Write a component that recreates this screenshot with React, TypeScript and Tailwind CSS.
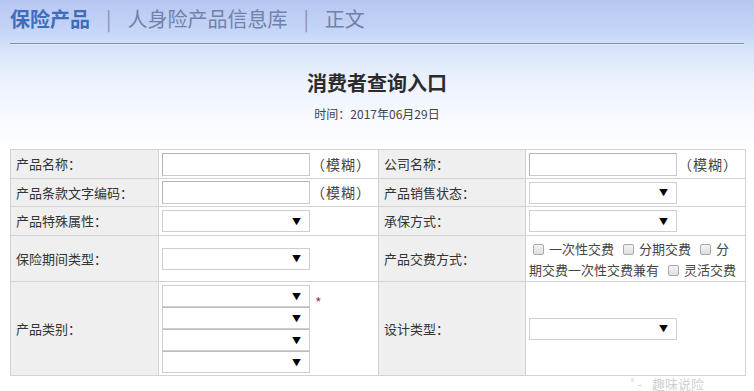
const font = { fontFamily: '"Microsoft YaHei", "Noto Sans CJK SC", "Liberation Sans", sans-serif' }

function TextBox() {
    return <div className="w-[148px] h-[23px] bg-white border border-[#c9c9c9] border-t-[#b5b5b5] border-l-[#b5b5b5]" />
}

function Fuzzy() {
    return <span className="ml-[1px] text-[14px] tracking-[1px] text-[#444]">（模糊）</span>
}

function Select({ className = "" }: { className?: string }) {
    return (
        <div className={`w-[148px] h-[22px] bg-white border border-[#cfcfcf] flex items-center justify-end pr-[8px] ${className}`}>
            <span className="text-[9px] text-black leading-none">▼</span>
        </div>
    )
}

function Check() {
    return <span className="inline-block w-[11px] h-[11px] border border-[#a9a9a9] rounded-[2px] bg-gradient-to-b from-[#f4f4f4] to-[#dedede] align-[-1px] mr-[5px]" />
}

function Label({ children }: { children: React.ReactNode }) {
    return (
        <td className="bg-[#efefef] border border-[#d3d3d3] pl-[5px] text-[13px] text-[#333]">
            {children}
        </td>
    )
}

export default function App() {
    return (
        <div className="w-[754px] h-[391px] overflow-hidden bg-white" style={font}>
            <div className="bg-[linear-gradient(to_bottom,#b6c6f1_0px,#c6d6f8_32px,#d9e4fb_50px,#ebf1fd_80px,#f8faff_120px,#ffffff_150px)] pb-[27px]">
                <div className="h-[38px] flex items-center pl-[10px] text-[20px] leading-none">
                    <span className="font-bold text-[#3f6dbd]">保险产品</span>
                    <span className="text-[#8a94a8] mx-[16px]">|</span>
                    <span className="text-[#6f82a9]">人身险产品信息库</span>
                    <span className="text-[#8a94a8] mx-[16px]">|</span>
                    <span className="text-[#6f82a9]">正文</span>
                </div>
                <div className="mx-[10px] mt-[4px] flex flex-col">
                    <div className="h-[1px] bg-[#d6e0f6]" />
                    <div className="h-[1px] bg-[#7f8cab]" />
                    <div className="h-[1px] bg-[#e2eafc]" />
                </div>
                <h1 className="text-center text-[20px] font-bold text-[#2b2b2b] mt-[24px] leading-[28px]">消费者查询入口</h1>
                <p className="text-center text-[12px] text-[#444] mt-[9px] leading-[16px]">时间：2017年06月29日</p>
            </div>

            <table className="ml-[10px] w-[735px] border-collapse border border-[#cdcdcd] table-fixed text-[13px] text-[#333]">
                <colgroup>
                    <col className="w-[148px]" />
                    <col className="w-[220px]" />
                    <col className="w-[147px]" />
                    <col className="w-[220px]" />
                </colgroup>
                <tbody>
                    <tr className="h-[29px]">
                        <Label>产品名称：</Label>
                        <td className="border border-[#d3d3d3] pl-[3px]">
                            <div className="flex items-center">
                                <TextBox />
                                <Fuzzy />
                            </div>
                        </td>
                        <Label>公司名称：</Label>
                        <td className="border border-[#d3d3d3] pl-[3px]">
                            <div className="flex items-center">
                                <TextBox />
                                <Fuzzy />
                            </div>
                        </td>
                    </tr>
                    <tr className="h-[28px]">
                        <Label>产品条款文字编码：</Label>
                        <td className="border border-[#d3d3d3] pl-[3px]">
                            <div className="flex items-center">
                                <TextBox />
                                <Fuzzy />
                            </div>
                        </td>
                        <Label>产品销售状态：</Label>
                        <td className="border border-[#d3d3d3] pl-[3px]">
                            <Select />
                        </td>
                    </tr>
                    <tr className="h-[29px]">
                        <Label>产品特殊属性：</Label>
                        <td className="border border-[#d3d3d3] pl-[3px]">
                            <Select />
                        </td>
                        <Label>承保方式：</Label>
                        <td className="border border-[#d3d3d3] pl-[3px]">
                            <Select />
                        </td>
                    </tr>
                    <tr className="h-[46px]">
                        <Label>保险期间类型：</Label>
                        <td className="border border-[#d3d3d3] pl-[3px]">
                            <Select />
                        </td>
                        <Label>产品交费方式：</Label>
                        <td className="border border-[#d3d3d3] pl-[3px] pr-0 text-[13px] leading-[21px] text-[#444] whitespace-nowrap">
                            <span className="pl-[4px]"><Check />一次性交费</span>
                            <span className="ml-[9px]"><Check />分期交费</span>
                            <span className="ml-[9px]"><Check />分<br />期交费一次性交费兼有</span>
                            <span className="ml-[9px]"><Check />灵活交费</span>
                        </td>
                    </tr>
                    <tr className="h-[94px]">
                        <Label>产品类别：</Label>
                        <td className="border border-[#d3d3d3] pl-[3px] align-top pt-[3px]">
                            <div className="flex items-start">
                                <div className="flex flex-col">
                                    <Select />
                                    <Select className="border-t-[#bdbdbd]" />
                                    <Select className="border-t-[#bdbdbd]" />
                                    <Select className="border-t-[#bdbdbd]" />
                                </div>
                                <span className="ml-[5px] mt-[10px] text-[14px] leading-none text-[#b03050]">*</span>
                            </div>
                        </td>
                        <Label>设计类型：</Label>
                        <td className="border border-[#d3d3d3] pl-[3px]">
                            <Select />
                        </td>
                    </tr>
                </tbody>
            </table>
            <div className="flex justify-end pr-[50px] text-[13px] text-[#d0d0d0] leading-[16px]">
                <span className="mr-[10px]">ﾟ- </span>
                <span>趣味说险</span>
            </div>
        </div>
    )
}
